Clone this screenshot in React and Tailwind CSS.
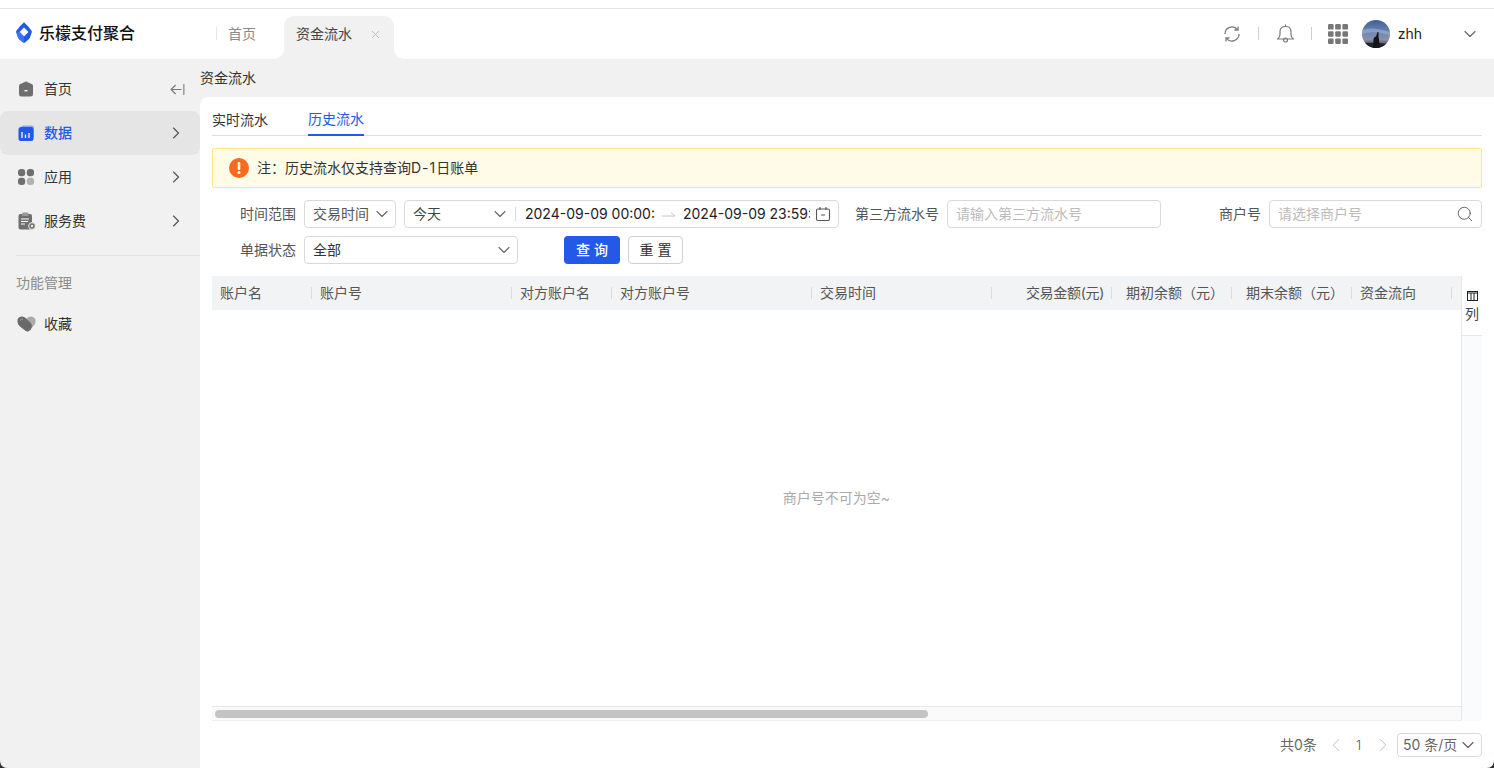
import { ArrowLeftFromLine, ChevronDown, ChevronLeft, ChevronRight, Search, X } from "lucide-react";

const font = { fontFamily: 'Inter, "Noto Sans CJK SC", sans-serif' };

const Logo = () => (
  <svg width="16" height="21" viewBox="0 0 16 21">
    <path d="M8 0.3 L11.6 3.8 L15.6 8.8 Q16 9.4 15.8 10.2 L14.2 15 Q13.8 16.4 12.6 17.4 L9 20.4 Q8 21 7 20.4 L3.4 17.4 Q2.2 16.4 1.8 15 L0.2 10.2 Q0 9.4 0.4 8.8 L4.4 3.8 Z" fill="#2458e6" />
    <path d="M8 5.4 L12.4 10 L8 14.6 L3.6 10 Z" fill="#fff" />
    <path d="M0.2 10.2 L3.6 10 L8 14.6 L8 20.8 Q7.5 20.8 7 20.4 L3.4 17.4 Q2.2 16.4 1.8 15 Z" fill="#3d72f0" />
  </svg>
);

const HomeIcon = () => (
  <svg width="16" height="16" viewBox="0 0 16 16">
    <path d="M8 0 L15 4 L1 4 Z" fill="#a8a8a8" />
    <path d="M1 5 Q1 3.2 3 2.8 L8 1 L13 2.8 Q15 3.2 15 5 V13 Q15 15.5 12.5 15.5 H3.5 Q1 15.5 1 13 Z" fill="#6f6f6f" />
    <rect x="6.5" y="9" width="3" height="1.4" fill="#fff" />
  </svg>
);

const DataIcon = () => (
  <svg width="16" height="16" viewBox="0 0 16 16">
    <rect x="3" y="0.5" width="13" height="13" rx="2.5" fill="#8aa8f0" />
    <rect x="0.5" y="2" width="15" height="14" rx="2.5" fill="#2458e6" />
    <path d="M4 7 V13 M7.5 9.5 V13 M11 8 V13" stroke="#fff" strokeWidth="1.3" />
  </svg>
);

const AppsIcon = () => (
  <svg width="16" height="16" viewBox="0 0 16 16">
    <rect x="0" y="0" width="7.2" height="7.2" rx="3" fill="#6f6f6f" />
    <rect x="8.8" y="0" width="7.2" height="7.2" rx="3" fill="#6f6f6f" />
    <rect x="0" y="8.8" width="7.2" height="7.2" rx="3" fill="#6f6f6f" />
    <rect x="8.8" y="8.8" width="7.2" height="7.2" rx="3" fill="#b2b2b2" />
  </svg>
);

const FeeIcon = () => (
  <svg width="18" height="18" viewBox="0 0 18 18">
    <rect x="0.5" y="2" width="13.5" height="15.5" rx="2" fill="#6f6f6f" />
    <rect x="4" y="0.5" width="6.5" height="3.5" rx="1" fill="#9a9a9a" />
    <path d="M3 7 H11 M3 9.5 H10 M3 12 H7" stroke="#fff" strokeWidth="1.1" />
    <circle cx="14" cy="14" r="3.4" fill="#6f6f6f" stroke="#f1f1f1" strokeWidth="1" />
    <circle cx="14" cy="14" r="1.2" fill="#f1f1f1" />
  </svg>
);

const FavIcon = () => (
  <svg width="19" height="16" viewBox="0 0 19 16">
    <path d="M9.5 3 Q11 0.6 14 0.6 Q18.6 1 18.6 5.4 Q18.6 9.6 10 15.6 L5 8 Z" fill="#ababab" />
    <path d="M0.4 5.4 Q0.4 1 4.6 0.6 Q7 0.4 9 2.2 L13.8 7 Q15.4 8.8 14.8 11.6 Q14 14.8 11 15.4 Q9.6 15.8 8.4 14.8 L3 10.6 Q0.4 8.4 0.4 5.4 Z" fill="#6a6a6a" />
    <path d="M3 4.6 Q4 3 6 3.2" stroke="#9a9a9a" strokeWidth="1" fill="none" />
  </svg>
);

const RefreshIcon = () => (
  <svg width="18" height="18" viewBox="0 0 18 18" fill="none" stroke="#7a7a7a" strokeWidth="1.3">
    <path d="M2 9 A7 7 0 0 1 14.5 4.6" />
    <path d="M16 9 A7 7 0 0 1 3.5 13.4" />
    <path d="M15 1.5 V5 H11.5" />
    <path d="M3 16.5 V13 H6.5" />
  </svg>
);

const BellIcon = () => (
  <svg width="19" height="19" viewBox="0 0 19 19" fill="none" stroke="#7a7a7a" strokeWidth="1.2">
    <path d="M1.5 15 Q4 13.5 4 10.5 V7.5 Q4 2.5 9.5 2.5 Q15 2.5 15 7.5 V10.5 Q15 13.5 17.5 15 Z" strokeLinejoin="round" />
    <path d="M9.5 0.5 V2.5" />
    <circle cx="9.5" cy="16" r="2" />
  </svg>
);

const GridIcon = () => (
  <svg width="20" height="20" viewBox="0 0 20 20" fill="#777">
    <rect x="0" y="0" width="5.6" height="5.6" rx="1.2" />
    <rect x="7.2" y="0" width="5.6" height="5.6" rx="1.2" />
    <rect x="14.4" y="0" width="5.6" height="5.6" rx="1.2" />
    <rect x="0" y="7.2" width="5.6" height="5.6" rx="1.2" />
    <rect x="7.2" y="7.2" width="5.6" height="5.6" rx="1.2" />
    <rect x="14.4" y="7.2" width="5.6" height="5.6" rx="1.2" />
    <rect x="0" y="14.4" width="5.6" height="5.6" rx="1.2" />
    <rect x="7.2" y="14.4" width="5.6" height="5.6" rx="1.2" />
    <rect x="14.4" y="14.4" width="5.6" height="5.6" rx="1.2" />
  </svg>
);

const Avatar = () => (
  <svg width="28" height="28" viewBox="0 0 28 28">
    <defs>
      <linearGradient id="sky" x1="0" y1="0" x2="0" y2="1">
        <stop offset="0" stopColor="#3f5f96" />
        <stop offset="0.45" stopColor="#6d88b4" />
        <stop offset="0.7" stopColor="#8b8fa6" />
        <stop offset="1" stopColor="#2c2c34" />
      </linearGradient>
      <clipPath id="round">
        <circle cx="14" cy="14" r="14" />
      </clipPath>
    </defs>
    <g clipPath="url(#round)">
      <rect width="28" height="28" fill="url(#sky)" />
      <path d="M0 10 Q10 6 28 12 L28 15 Q12 10 0 14 Z" fill="#9fb2cf" opacity="0.6" />
      <path d="M0 23 Q10 22 28 24 V28 H0 Z" fill="#23232a" />
      <path d="M11 28 L11.5 19 Q12 16.5 14 16.5 L15.5 12 L16.5 12 L16.5 17 Q17.5 20 17.5 28 Z" fill="#14141a" />
    </g>
  </svg>
);

const CalendarIcon = () => (
  <svg width="16" height="16" viewBox="0 0 16 16" fill="none" stroke="#555" strokeWidth="1.1">
    <rect x="1.5" y="3" width="13" height="11.5" rx="1.5" />
    <path d="M5 1 V4 M11 1 V4 M6 9 H10" />
  </svg>
);

const RangeArrow = () => (
  <svg width="14" height="6" viewBox="0 0 14 6" fill="none" stroke="#c4c4c4" strokeWidth="1">
    <path d="M0 5 H13 L9 1.5" />
  </svg>
);

const AlertIcon = () => (
  <svg width="20" height="20" viewBox="0 0 20 20">
    <circle cx="10" cy="10" r="10" fill="#fa6a1c" />
    <rect x="8.7" y="4" width="2.6" height="8" rx="1.3" fill="#fff" />
    <circle cx="10" cy="14.6" r="1.5" fill="#fff" />
  </svg>
);

const ColumnsIcon = () => (
  <svg width="11" height="10" viewBox="0 0 11 10" fill="none" stroke="#222" strokeWidth="1">
    <rect x="0.5" y="0.5" width="10" height="9" />
    <path d="M0.5 2 H10.5 M4 2 V9.5 M7 2 V9.5" />
  </svg>
);

const Corner = ({ className, d }) => (
  <svg width="8" height="8" viewBox="0 0 8 8" className={className}>
    <path d={d} fill="#2b2f33" />
  </svg>
);

const menus = [
  { label: "首页", icon: <HomeIcon />, collapse: true },
  { label: "数据", icon: <DataIcon />, active: true, arrow: true },
  { label: "应用", icon: <AppsIcon />, arrow: true },
  { label: "服务费", icon: <FeeIcon />, arrow: true },
];

const columns = [
  { label: "账户名", width: "w-[100px]" },
  { label: "账户号", width: "w-[200px]" },
  { label: "对方账户名", width: "w-[100px]" },
  { label: "对方账户号", width: "w-[200px]" },
  { label: "交易时间", width: "w-[180px]" },
  { label: "交易金额(元)", width: "w-[120px] justify-end tracking-[-0.3px]" },
  { label: "期初余额（元）", width: "w-[120px] justify-end" },
  { label: "期末余额（元）", width: "w-[120px] justify-end" },
  { label: "资金流向", width: "w-[100px]" },
];

const Sidebar = () => (
  <aside className="w-[200px] shrink-0 pt-2">
    {menus.map((m) => (
      <div
        key={m.label}
        className={`flex h-11 items-center rounded-lg pl-[18px] pr-[14px] ${m.active ? "bg-[#e5e5e5]" : ""}`}
      >
        <span className="flex w-[26px] items-center">{m.icon}</span>
        <span className={`text-sm leading-5 ${m.active ? "font-medium text-[#2458e6]" : "text-[#333]"}`}>
          {m.label}
        </span>
        <span className="ml-auto">
          {m.collapse && <ArrowLeftFromLine size={17} strokeWidth={1.5} className="text-[#777]" />}
          {m.arrow && <ChevronRight size={20} strokeWidth={1.4} className="text-[#555]" />}
        </span>
      </div>
    ))}
    <div className="ml-4 mt-3 border-t border-[#e3e3e3] pt-[17px] text-sm leading-5 text-[#8a8a8a]">功能管理</div>
    <div className="mt-[9px] flex h-11 items-center pl-[17px]">
      <span className="flex w-[27px] items-center">
        <FavIcon />
      </span>
      <span className="text-sm leading-5 text-[#333]">收藏</span>
    </div>
  </aside>
);

const Header = () => (
  <header className="flex h-[51px] shrink-0 items-end border-t border-[#e4e4e4] bg-white">
    <div className="flex h-full w-[216px] shrink-0 items-center pb-[3px] pl-4">
      <Logo />
      <span className="ml-[7px] text-base font-medium leading-6 text-[#111]">乐檬支付聚合</span>
    </div>
    <div className="flex h-full w-[68px] shrink-0 items-center pb-[1px]">
      <span className="h-[13px] w-px bg-[#e5e5e5]" />
      <span className="ml-[11px] text-sm leading-5 text-[#8a8a8a]">首页</span>
    </div>
    <div className="relative flex h-[43px] w-[110px] items-center rounded-t-[10px] bg-[#f1f1f1] pb-[7px] pl-3">
      <span className="absolute -left-3 bottom-0 h-3 w-3 bg-[#f1f1f1]">
        <span className="block h-3 w-3 rounded-br-[10px] bg-white" />
      </span>
      <span className="absolute -right-3 bottom-0 h-3 w-3 bg-[#f1f1f1]">
        <span className="block h-3 w-3 rounded-bl-[10px] bg-white" />
      </span>
      <span className="text-sm leading-5 text-[#444]">资金流水</span>
      <X size={13} strokeWidth={1.6} className="ml-[17px] text-[#bbb]" />
    </div>
    <div className="ml-auto flex h-full items-center pb-[1px] pr-[14px]">
      <RefreshIcon />
      <span className="mx-[17px] h-[13px] w-px bg-[#cfcfcf]" />
      <BellIcon />
      <span className="mx-[16px] h-[13px] w-px bg-[#cfcfcf]" />
      <GridIcon />
      <span className="ml-[14px]">
        <Avatar />
      </span>
      <span className="ml-2 text-sm leading-5 text-[#222]">zhh</span>
      <ChevronDown size={20} strokeWidth={1.4} className="ml-[38px] text-[#666]" />
    </div>
  </header>
);

const Filters = () => (
  <div className="mt-3 flex flex-col gap-2 text-sm leading-5">
    <div className="flex h-7 items-center">
      <label className="w-[84px] shrink-0 text-right text-[#555]">时间范围</label>
      <div className="ml-2 flex h-7 w-[92px] items-center justify-between rounded border border-[#d9d9d9] pl-2 pr-[3px] text-[#555]">
        交易时间
        <ChevronDown size={20} strokeWidth={1.3} className="text-[#666]" />
      </div>
      <div className="ml-2 flex h-7 w-[435px] items-center rounded border border-[#d9d9d9]">
        <div className="flex h-[14px] w-[111px] shrink-0 items-center justify-between border-r border-[#d9d9d9] pl-2 pr-[5px] text-[#444]">
          今天
          <ChevronDown size={20} strokeWidth={1.3} className="text-[#666]" />
        </div>
        <span className="ml-[9px] w-[130px] overflow-hidden whitespace-nowrap text-[#222]">2024-09-09 00:00:00</span>
        <span className="ml-[7px] w-[21px]">
          <RangeArrow />
        </span>
        <span className="w-[127px] overflow-hidden whitespace-nowrap text-[#222]">2024-09-09 23:59:59</span>
        <span className="ml-[5px]">
          <CalendarIcon />
        </span>
      </div>
      <label className="ml-4 w-[84px] shrink-0 whitespace-nowrap text-[#555]">第三方流水号</label>
      <div className="ml-2 flex h-7 w-[214px] items-center rounded border border-[#d9d9d9] pl-2 text-[#bbb]">
        请输入第三方流水号
      </div>
      <label className="ml-[58px] w-[42px] shrink-0 whitespace-nowrap text-[#555]">商户号</label>
      <div className="ml-2 flex h-7 flex-1 items-center justify-between rounded border border-[#d9d9d9] pl-2 pr-[7px] text-[#bbb]">
        请选择商户号
        <Search size={18} strokeWidth={1.3} className="text-[#666]" />
      </div>
    </div>
    <div className="flex h-7 items-center">
      <label className="w-[84px] shrink-0 text-right text-[#555]">单据状态</label>
      <div className="ml-2 flex h-7 w-[214px] items-center justify-between rounded border border-[#d9d9d9] pl-2 pr-[3px] text-[#333]">
        全部
        <ChevronDown size={20} strokeWidth={1.3} className="text-[#666]" />
      </div>
      <button className="ml-[46px] flex h-7 w-14 items-center justify-center rounded bg-[#2458e6] pl-1 font-medium tracking-[4px] text-white">
        查询
      </button>
      <button className="ml-2 flex h-7 w-[55px] items-center justify-center rounded border border-[#d0d0d0] pl-1 tracking-[4px] text-[#333]">
        重置
      </button>
    </div>
  </div>
);

const Table = () => (
  <div className="mt-3 flex min-h-0 flex-1">
    <div className="flex min-w-0 flex-1 flex-col border-b border-[#eee]">
      <div className="flex h-[34px] shrink-0 overflow-hidden bg-[#f1f3f5] text-sm leading-5 text-[#555]">
        {columns.map((c) => (
          <div key={c.label} className={`relative flex shrink-0 items-center px-2 ${c.width}`}>
            <span className="whitespace-nowrap">{c.label}</span>
            <span className="absolute right-0 top-[11px] h-3 w-px bg-[#dcdcdc]" />
          </div>
        ))}
      </div>
      <div className="flex flex-1 items-center justify-center pb-[20px] text-sm leading-5 text-[#aaa]">
        商户号不可为空~
      </div>
      <div className="h-[14px] shrink-0 border-t border-[#e8e8e8] bg-[#fafafa] px-[3px] pt-[3px]">
        <div className="h-2 w-[713px] rounded bg-[#c4c4c4]" />
      </div>
    </div>
    <div className="flex w-[21px] shrink-0 flex-col border-l border-[#e8e8e8] bg-[#fafbfc]">
      <div className="flex h-[60px] flex-col items-center border-b border-[#e8e8e8] bg-white pt-[15px] text-sm leading-5 text-[#444]">
        <ColumnsIcon />
        <span className="mt-[3px]">列</span>
      </div>
    </div>
  </div>
);

const Pagination = () => (
  <div className="flex h-[47px] shrink-0 items-center justify-end pt-[1px] text-sm leading-5 text-[#666]">
    <span>共0条</span>
    <ChevronLeft size={22} strokeWidth={1} className="ml-[8px] text-[#bbb]" />
    <span className="ml-[9px] text-[13px] font-light text-[#555]">1</span>
    <ChevronRight size={22} strokeWidth={1} className="ml-[11px] text-[#bbb]" />
    <div className="ml-[3px] flex h-6 w-[85px] items-center justify-between whitespace-nowrap rounded border border-[#d9d9d9] pl-[5px] pr-[3px]">
      50 条/页
      <ChevronDown size={20} strokeWidth={1.5} className="text-[#666]" />
    </div>
  </div>
);

export default function App() {
  return (
    <div style={font} className="relative flex h-[768px] w-full flex-col overflow-hidden bg-[#f1f1f1]">
      <div className="h-2 shrink-0 bg-white" />
      <Header />
      <div className="flex min-h-0 flex-1">
        <Sidebar />
        <main className="flex min-w-0 flex-1 flex-col">
          <div className="flex h-[38px] shrink-0 items-center text-sm leading-5 text-[#333]">资金流水</div>
          <div className="flex min-h-0 flex-1 flex-col rounded-tl-lg bg-white px-3">
            <div className="flex h-[39px] shrink-0 items-end gap-10 border-b border-[#ddd] text-sm leading-5">
              <span className="pb-[5px] text-[#333]">实时流水</span>
              <span className="-mb-px border-b-2 border-[#2458e6] pb-[5px] text-[#2458e6]">历史流水</span>
            </div>
            <div className="mt-3 flex h-10 shrink-0 items-center rounded-[2px] border border-[#ffe58f] bg-[#fffbe6] pl-4 text-sm leading-5 text-[#333]">
              <AlertIcon />
              <span className="ml-[8px]">
                注：历史流水仅支持查询<span className="tracking-[1px]">D-1</span>日账单
              </span>
            </div>
            <Filters />
            <Table />
            <Pagination />
          </div>
        </main>
      </div>
      <Corner className="absolute bottom-0 left-0" d="M0 0 Q0 8 8 8 H0 Z" />
      <Corner className="absolute bottom-0 right-0" d="M8 0 Q8 8 0 8 H8 Z" />
    </div>
  );
}
